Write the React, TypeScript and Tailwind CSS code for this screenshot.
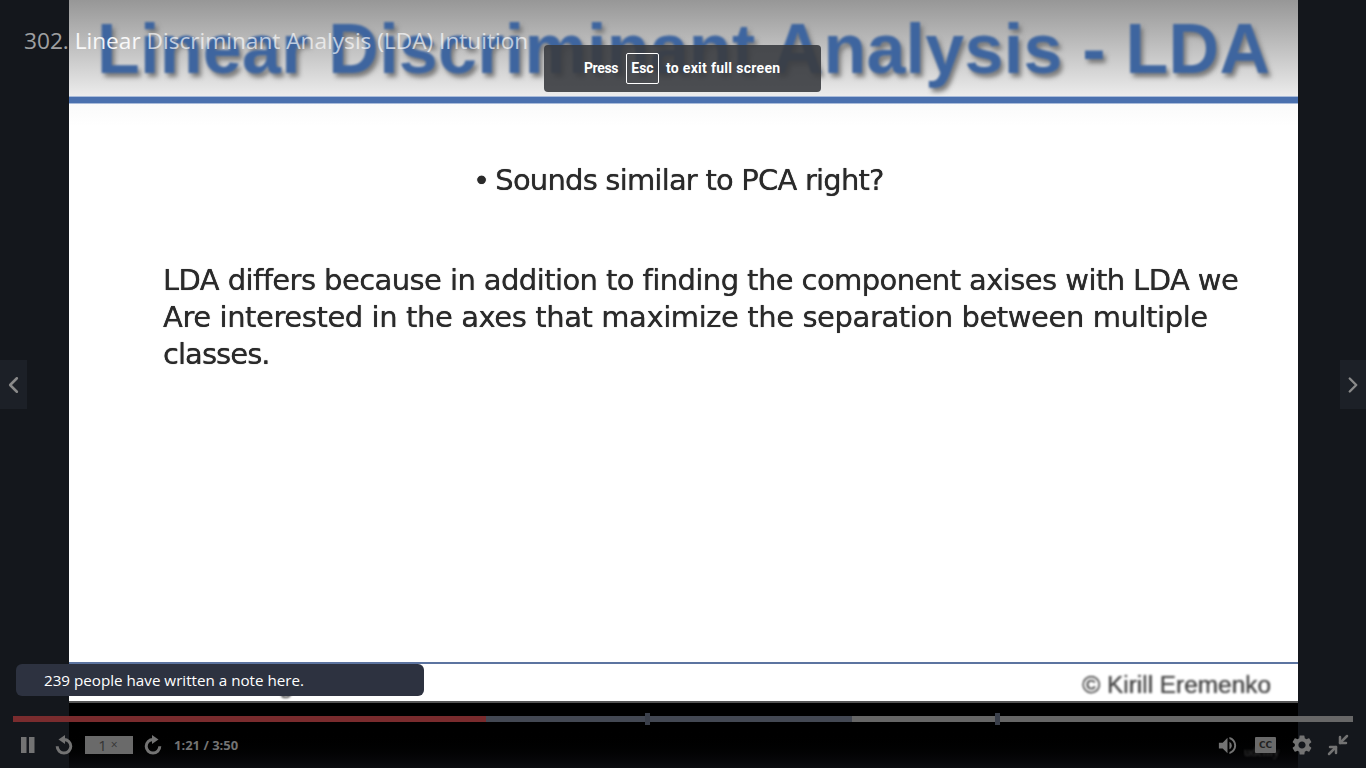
import { ChevronLeft, ChevronRight, Minimize2 } from "lucide-react";
import { MdSettings, MdVolumeUp } from "react-icons/md";

const sans = "font-['Open_Sans','Noto_Sans',sans-serif]";

function SkipIcon({ flip }: { flip?: boolean }) {
  return (
    <svg width="20" height="20" viewBox="0 0 20 20" className={flip ? "-scale-x-100" : ""} aria-hidden="true">
      <path d="M10 4.5A6.8 6.8 0 1 1 3.2 11.3" fill="none" stroke="currentColor" strokeWidth="3" />
      <polygon points="11,0 11,9 4.5,4.5" fill="currentColor" />
    </svg>
  );
}

function Slide() {
  return (
    <main className="flex h-full w-[1229px] shrink-0 flex-col bg-black">
      <header className="h-[96px] shrink-0 overflow-hidden bg-gradient-to-b from-[#979797] to-[#ececec] pl-[28px]">
        <h2 className="whitespace-nowrap pt-[9px] font-['Liberation_Sans',sans-serif] text-[70px] leading-[80px] font-bold tracking-[0.26px] text-[#3e659f] blur-[1px] [text-shadow:3px_4px_4px_#7a7a7a]">
          Linear Discriminant Analysis - LDA
        </h2>
      </header>
      <div className="h-[8px] shrink-0 border-y border-[#a9bbd9] bg-[#4a70ae]" />
      <section className="flex-1 bg-gradient-to-b from-[#fafafa] to-white to-[4%] font-['DejaVu_Sans',sans-serif] text-[#2a2a2a] [text-shadow:0_0_0.7px_#2a2a2a]">
        <p className="flex gap-[6px] pt-[56px] pl-[404px] text-[29px] leading-[40px] tracking-[-0.8px] blur-[0.6px]">
          <span>•</span>
          <span>Sounds similar to PCA right?</span>
        </p>
        <p className="pt-[62px] pl-[94px] text-[29px] leading-[37px] whitespace-nowrap blur-[0.6px]">
          <span className="tracking-[-0.58px]">LDA differs because in addition to finding the component axises with LDA we</span>
          <br />
          <span className="tracking-[-0.42px]">Are interested in the axes that maximize the separation between multiple</span>
          <br />
          <span className="tracking-[-0.95px]">classes.</span>
        </p>
      </section>
      <footer className="flex h-[41px] shrink-0 items-center justify-between border-t-2 border-b-2 border-t-[#5c74a0] border-b-[#555] bg-white pt-[6px] pr-[27px] pl-[30px] font-['Liberation_Sans',sans-serif] text-[24.4px] text-[#444] [text-shadow:0_0_0.7px_#444]">
        <span className="blur-[0.8px]">Machine Learning</span>
        <span className="blur-[0.8px]">© Kirill Eremenko</span>
      </footer>
      <div className="h-[65px] shrink-0 bg-gradient-to-b from-black from-[40%] to-[#0c0d10]" />
    </main>
  );
}

function ProgressBar() {
  return (
    <div className="relative mx-[13px] flex h-[6px]">
      <div className="h-full w-[473px] bg-[#7f2d2f]/95" />
      <div className="h-full w-[366px] bg-[#474c57]/95" />
      <div className="h-full flex-1 bg-[#6b6b6b]/95" />
      <span className="absolute top-[-3px] left-[632px] h-[12px] w-[5px] bg-[#3a3f4a]" />
      <span className="absolute top-[-3px] left-[982px] h-[12px] w-[5px] bg-[#3a3f4a]" />
    </div>
  );
}

function Controls() {
  return (
    <div className="absolute inset-x-0 bottom-0 h-[52px] pt-0">
      <ProgressBar />
      <div className="flex h-[46px] items-center justify-between pr-[16px] pl-[21px] text-[#737373]">
        <div className="flex items-center">
          <svg width="14" height="16" viewBox="0 0 14 16" fill="currentColor" aria-label="Pause">
            <rect x="0" y="0" width="5.5" height="16" />
            <rect x="8" y="0" width="5.5" height="16" />
          </svg>
          <span className="ml-[19px]">
            <SkipIcon />
          </span>
          <span className={`ml-[11px] flex h-[18px] w-[48px] items-center justify-center bg-[#6a6a6a] pr-[2px] text-[15px] text-[#333] ${sans}`}>
            1<span className="ml-[4px] text-[12px]">×</span>
          </span>
          <span className="ml-[10px]">
            <SkipIcon flip />
          </span>
          <span className={`ml-[11px] pt-[1px] text-[13px] font-bold ${sans}`}>1:21 / 3:50</span>
        </div>
        <div className="relative flex items-center">
          <span className="absolute top-[12px] left-[28px] font-['Liberation_Serif',serif] text-[13px] leading-none text-[#3d3d3d] blur-[1px]">
            udemy
          </span>
          <MdVolumeUp className="size-[23px]" />
          <span className="relative ml-[16px] flex h-[16px] w-[21px] items-center justify-center rounded-[1px] bg-[#6a6a6a] font-['DejaVu_Sans',sans-serif] text-[9px] leading-none font-bold text-[#222]">
            CC
          </span>
          <MdSettings className="ml-[14px] size-[24px]" />
          <Minimize2 className="ml-[12px] size-[24px]" strokeWidth={2.5} />
        </div>
      </div>
    </div>
  );
}

export default function App() {
  return (
    <div className="relative flex h-screen w-full overflow-hidden bg-[#14171c]">
      <div className="w-[69px] shrink-0" />
      <Slide />
      <div className="flex-1" />

      <h1 className={`absolute top-[25px] left-[24px] text-[22.65px] leading-[32px] text-white/60 ${sans}`}>
        302. <span className="text-white/90">Linear</span> <span className="text-white/65">Discriminant Analysis (LDA) Intuition</span>
      </h1>

      <div className="absolute top-[45px] left-[544px] flex h-[47px] w-[277px] items-center rounded-[4px] bg-[#3a3c40]/90 pl-[40px] font-['Roboto',sans-serif] text-[14px] font-bold text-white">
        <span className="tracking-[-0.4px]">Press</span>
        <span className="ml-[8px] flex h-[31px] w-[33px] items-center justify-center rounded-[2px] border border-white">Esc</span>
        <span className="ml-[7px] tracking-[0.3px]">to exit full screen</span>
      </div>

      <button className="absolute top-[360px] left-0 flex h-[49px] w-[27px] items-center justify-center bg-[#1c2027] text-[#8a8a8a]">
        <ChevronLeft className="size-[32px]" strokeWidth={2.2} />
      </button>
      <button className="absolute top-[360px] right-0 flex h-[49px] w-[26px] items-center justify-center bg-[#1c2027] text-[#8a8a8a]">
        <ChevronRight className="size-[32px]" strokeWidth={2.2} />
      </button>

      <div className={`absolute top-[664px] left-[16px] flex h-[32px] w-[408px] items-center rounded-[6px] bg-[#2d3240] pl-[28px] text-[15.2px] text-white ${sans}`}>
        <span className="pt-[1px]">239 people have written a note here.</span>
      </div>

      <Controls />
    </div>
  );
}
